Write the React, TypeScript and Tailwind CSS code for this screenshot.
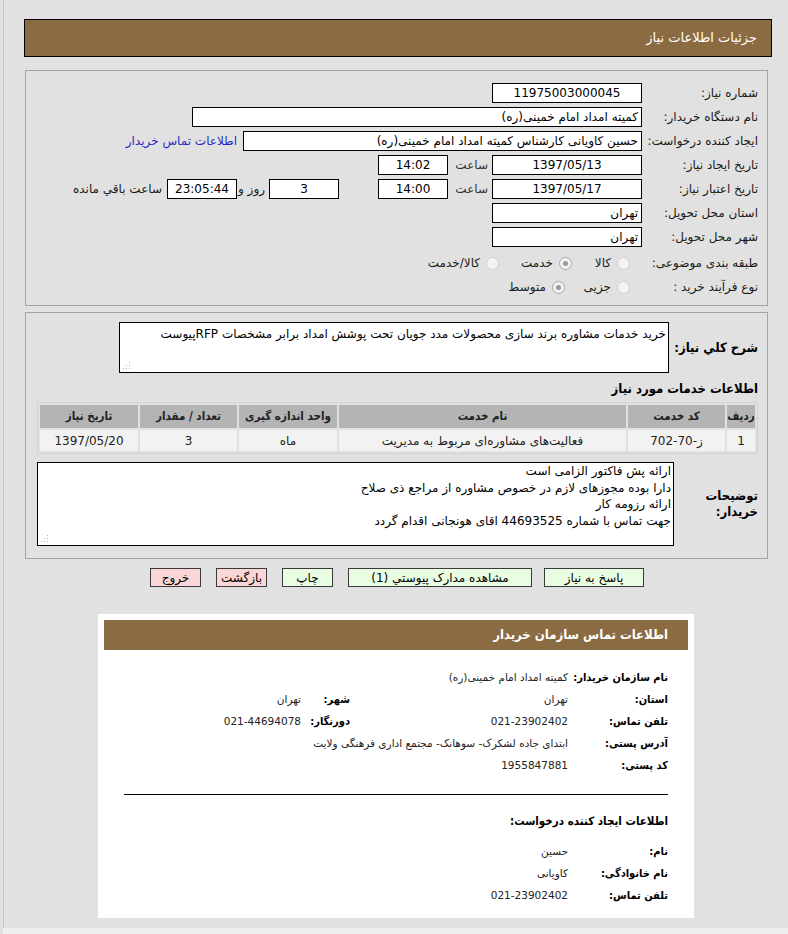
import type { ReactNode } from "react";

function Box({ className = "", children }: { className?: string; children?: ReactNode }) {
  return (
    <div className={`flex h-[20px] shrink-0 items-center border border-black bg-white px-[3px] text-[12px] leading-none text-black ${className}`}>
      {children}
    </div>
  );
}

function Radio({ checked }: { checked?: boolean }) {
  return (
    <span className={`inline-flex h-[13px] w-[13px] shrink-0 items-center justify-center rounded-full border bg-[#f3f3f3] ${checked ? "border-[#a8a8a8]" : "border-[#cfcfcf]"}`}>
      {checked ? <span className="h-[5px] w-[5px] rounded-full bg-[#9a9a9a]" /> : null}
    </span>
  );
}

function Grip() {
  return (
    <svg className="absolute bottom-[2px] left-[3px]" width="7" height="8" viewBox="0 0 7 8">
      {[0, 3, 6].map((x) => [1, 4, 7].map((y) => (y >= 7 - x ? <rect key={`${x}-${y}`} x={x} y={y - 1} width="1" height="1" fill="#b5b5b5" /> : null)))}
    </svg>
  );
}

function Btn({ className = "", children }: { className?: string; children: ReactNode }) {
  return (
    <div className={`flex h-[19px] shrink-0 items-center justify-center border border-[#3a3a3a] text-[12px] leading-none text-black ${className}`}>
      {children}
    </div>
  );
}

const services = [
  { row: "1", code: "ز-70-702", name: "فعالیت‌های مشاوره‌ای مربوط به مدیریت", unit: "ماه", qty: "3", date: "1397/05/20" },
];

const bold = "font-['DejaVu_Sans_Condensed','DejaVu_Sans',sans-serif] font-bold";

function ContactRow({ label, value, label2, value2 }: { label: string; value: string; label2?: string; value2?: string }) {
  return (
    <div className="flex h-[22px] items-center">
      <div className={`w-[100px] shrink-0 text-[11px] text-black ${bold}`}>{label}</div>
      <div className={`${label2 ? "w-[218px]" : ""} shrink-0 text-[10.5px] text-[#222]`}>{value}</div>
      {label2 ? <div className={`w-[49px] shrink-0 text-[11px] text-black ${bold}`}>{label2}</div> : null}
      {value2 ? <div className="text-[10.5px] text-[#222]">{value2}</div> : null}
    </div>
  );
}

export default function App() {
  return (
    <div className="h-[934px] overflow-hidden whitespace-nowrap bg-[#e1e1e1] pl-[3px] font-['DejaVu_Sans',sans-serif] text-[12px] text-[#1a1a1a]">
      <div dir="rtl" className="flex h-[928px] flex-col border-l border-[#c6c6c6]">
        {/* header */}
        <div className="mr-[16px] mt-[19px] flex h-[38px] w-[748px] items-center border border-black bg-[#8b6b41] pr-[14px] text-[13px] text-white">
          جزئیات اطلاعات نیاز
        </div>

        {/* main form */}
        <div className="mr-[20px] mt-[13px] w-[743px] border border-[#a3a3a3] pb-[6px] pt-[10px]">
          <div className="flex h-[24px] items-center">
            <div className="w-[125px] shrink-0 pr-[9px]">شماره نیاز:</div>
            <Box className="w-[150px] justify-center">11975003000045</Box>
          </div>
          <div className="flex h-[24px] items-center">
            <div className="w-[125px] shrink-0 pr-[9px]">نام دستگاه خریدار:</div>
            <Box className="w-[450px]">کمیته امداد امام خمینی(ره)</Box>
          </div>
          <div className="flex h-[24px] items-center">
            <div className="w-[125px] shrink-0 pr-[9px]">ایجاد کننده درخواست:</div>
            <Box className="w-[399px]">حسین کاویانی کارشناس کمیته امداد امام خمینی(ره)</Box>
            <span className="mr-[6px] text-[#2a2ac4]">اطلاعات تماس خریدار</span>
          </div>
          <div className="flex h-[24px] items-center">
            <div className="w-[125px] shrink-0 pr-[9px]">تاریخ ایجاد نیاز:</div>
            <Box className="w-[150px] justify-center">1397/05/13</Box>
            <div className="w-[44px] shrink-0 pr-[4px] text-[#333]">ساعت</div>
            <Box className="w-[70px] justify-center">14:02</Box>
          </div>
          <div className="flex h-[24px] items-center">
            <div className="w-[125px] shrink-0 pr-[9px]">تاریخ اعتبار نیاز:</div>
            <Box className="w-[150px] justify-center">1397/05/17</Box>
            <div className="w-[44px] shrink-0 pr-[4px] text-[#333]">ساعت</div>
            <Box className="w-[70px] justify-center">14:00</Box>
            <Box className="mr-[39px] w-[70px] justify-center">3</Box>
            <div className="w-[32px] shrink-0 pr-[4px]">روز و</div>
            <Box className="w-[70px] justify-center bg-[#efebc6]">23:05:44</Box>
            <span className="mr-[5px]">ساعت باقي مانده</span>
          </div>
          <div className="flex h-[24px] items-center">
            <div className="w-[125px] shrink-0 pr-[9px]">استان محل تحویل:</div>
            <Box className="w-[150px]">تهران</Box>
          </div>
          <div className="flex h-[24px] items-center">
            <div className="w-[125px] shrink-0 pr-[9px]">شهر محل تحویل:</div>
            <Box className="w-[150px]">تهران</Box>
          </div>
          <div className="mt-[2px] flex h-[24px] items-center">
            <div className="w-[125px] shrink-0 pr-[9px]">طبقه بندی موضوعی:</div>
            <div className="flex w-[70px] shrink-0 items-center gap-[6px] pr-[12px]">
              <Radio />
              <span>کالا</span>
            </div>
            <div className="flex w-[73px] shrink-0 items-center gap-[6px]">
              <Radio checked />
              <span>خدمت</span>
            </div>
            <div className="flex items-center gap-[6px]">
              <Radio />
              <span>کالا/خدمت</span>
            </div>
          </div>
          <div className="flex h-[24px] items-center">
            <div className="w-[125px] shrink-0 pr-[9px]">نوع فرآیند خرید :</div>
            <div className="flex w-[77px] shrink-0 items-center gap-[6px] pr-[12px]">
              <Radio />
              <span>جزیی</span>
            </div>
            <div className="flex items-center gap-[6px]">
              <Radio checked />
              <span>متوسط</span>
            </div>
          </div>
        </div>

        {/* description + services */}
        <div className="mr-[20px] mt-[6px] w-[743px] border border-[#a3a3a3] pb-[12px] pt-[9px]">
          <div className="flex items-center">
            <div className={`w-[98px] shrink-0 pr-[9px] text-[13px] text-black ${bold}`}>شرح کلي نیاز:</div>
            <div className="relative h-[51px] w-[550px] border border-black bg-white px-[2px] pt-[2px] text-[12px] text-black">
              خرید خدمات مشاوره برند سازی محصولات مدد جویان تحت پوشش امداد برابر مشخصات RFPپیوست
              <Grip />
            </div>
          </div>
          <div className={`mt-[6px] flex h-[20px] items-center pr-[9px] text-[13px] text-black ${bold}`}>اطلاعات خدمات مورد نیاز</div>
          <table className="mr-[9px] mt-[3px] w-[721px] border-separate border-spacing-[2px] border border-[#d2d2d2] text-[12px]">
            <thead>
              <tr className={`h-[23px] bg-[#b4b4b4] text-[11.5px] text-[#222] ${bold}`}>
                <th className="w-[28px]">ردیف</th>
                <th className="w-[97px]">کد خدمت</th>
                <th className="w-[287px]">نام خدمت</th>
                <th className="w-[98px]">واحد اندازه گیری</th>
                <th className="w-[97px]">تعداد / مقدار</th>
                <th>تاریخ نیاز</th>
              </tr>
            </thead>
            <tbody>
              {services.map((s) => (
                <tr key={s.row} className="h-[21px] bg-[#f2f2f2] text-center text-[#222]">
                  <td>{s.row}</td>
                  <td>
                    <span dir="ltr">{s.code}</span>
                  </td>
                  <td>{s.name}</td>
                  <td>{s.unit}</td>
                  <td>{s.qty}</td>
                  <td>{s.date}</td>
                </tr>
              ))}
            </tbody>
          </table>
          <div className="mt-[8px] flex items-center">
            <div className={`w-[93px] shrink-0 pr-[9px] text-[13px] leading-[16px] text-black ${bold}`}>
              توضیحات
              <br />
              خریدار:
            </div>
            <div className="relative h-[84px] w-[637px] border border-black bg-white px-[2px] text-[12px] leading-[16.5px] text-black">
              <div>ارائه پش فاکتور الزامی است</div>
              <div>دارا بوده مجوزهای لازم در خصوص مشاوره از مراجع ذی صلاح</div>
              <div>ارائه رزومه کار</div>
              <div>جهت تماس با شماره 44693525 اقای هونجانی اقدام گردد</div>
              <Grip />
            </div>
          </div>
        </div>

        {/* actions */}
        <div className="mt-[9px] flex pr-[144px]">
          <Btn className="w-[100px] bg-[#e9fde2]">پاسخ به نیاز</Btn>
          <Btn className="mr-[12px] w-[184px] bg-[#e9fde2]">مشاهده مدارک پیوستي (1)</Btn>
          <Btn className="mr-[15px] w-[51px] bg-[#e9fde2]">چاپ</Btn>
          <Btn className="mr-[15px] w-[51px] bg-[#fbd6d6]">بازگشت</Btn>
          <Btn className="mr-[15px] w-[51px] bg-[#fbd6d6]">خروج</Btn>
        </div>

        {/* buyer contact */}
        <div className="mr-[94px] mt-[27px] w-[596px] bg-white p-[6px]">
          <div className={`flex h-[30px] items-center bg-[#8b6b41] pr-[20px] text-[13px] text-white ${bold}`}>اطلاعات تماس سازمان خریدار</div>
          <div className="mt-[17px] pr-[20px]">
            <ContactRow label="نام سازمان خریدار:" value="کمیته امداد امام خمینی(ره)" />
            <ContactRow label="استان:" value="تهران" label2="شهر:" value2="تهران" />
            <ContactRow label="تلفن تماس:" value="021-23902402" label2="دورنگار:" value2="021-44694078" />
            <ContactRow label="آدرس پستی:" value="ابتدای جاده لشکرک- سوهانک- مجتمع اداری فرهنگی ولایت" />
            <ContactRow label="کد پستی:" value="1955847881" />
          </div>
          <div className="mx-[20px] mt-[17px] h-[1px] bg-black" />
          <div className={`mt-[16px] flex h-[22px] items-center pr-[20px] text-[11.5px] text-black ${bold}`}>اطلاعات ایجاد کننده درخواست:</div>
          <div className="mb-[5px] mt-[8px] pr-[20px]">
            <ContactRow label="نام:" value="حسین" />
            <ContactRow label="نام خانوادگی:" value="کاویانی" />
            <ContactRow label="تلفن تماس:" value="021-23902402" />
          </div>
        </div>
      </div>
      <div className="h-[6px] bg-[#efefef]" />
    </div>
  );
}
